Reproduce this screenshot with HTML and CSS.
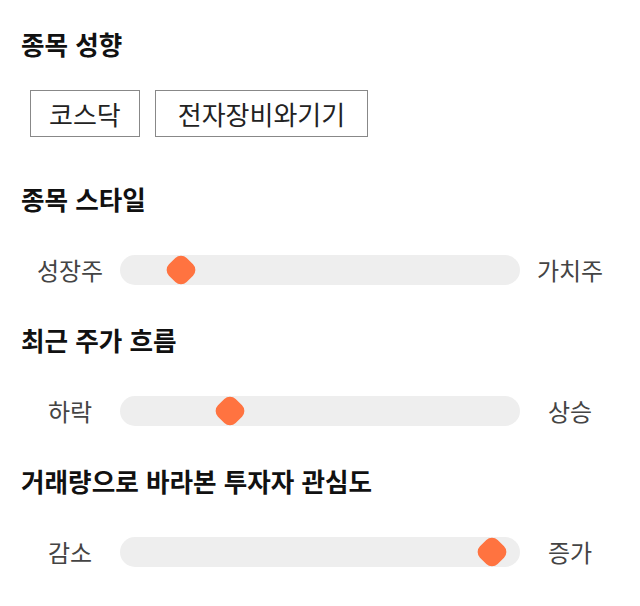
FILE: index.html
```html
<!DOCTYPE html>
<html lang="ko">
<head>
    <meta charset="UTF-8">
    <title>종목 분석</title>
    <link rel="stylesheet" href="styles.css">
</head>
<body>

<div class="section">
    <h2 class="title tight">종목 성향</h2>
    <div class="chips">
        <span class="chip">코스닥</span>
        <span class="chip wide">전자장비와기기</span>
    </div>
</div>

<div class="section">
    <h2 class="title">종목 스타일</h2>
    <div class="slider">
        <span class="label">성장주</span>
        <div class="track"><span class="thumb" style="left: 15.2%"></span></div>
        <span class="label">가치주</span>
    </div>
</div>

<div class="section">
    <h2 class="title">최근 주가 흐름</h2>
    <div class="slider">
        <span class="label">하락</span>
        <div class="track"><span class="thumb" style="left: 27.4%"></span></div>
        <span class="label">상승</span>
    </div>
</div>

<div class="section">
    <h2 class="title">거래량으로 바라본 투자자 관심도</h2>
    <div class="slider">
        <span class="label">감소</span>
        <div class="track"><span class="thumb" style="left: 93%"></span></div>
        <span class="label">증가</span>
    </div>
</div>

</body>
</html>
```

FILE: styles.css
```css
body {
    font-family: "Noto Sans CJK KR", "Noto Sans", sans-serif;
    margin: 0;
    padding: 28px 20px;
    background: #fff;
    color: #111;
}
.section {
    margin-bottom: 39px;
}
.title {
    font-size: 25.6px;
    font-weight: 700;
    line-height: 32px;
    margin: 0 0 40px;
    padding-left: 1px;
}
.title.tight {
    margin-bottom: 30px;
}
.chips {
    display: flex;
    gap: 15px;
    padding-left: 10px;
    margin-bottom: 46px;
}
.chip {
    border: 1px solid #888;
    height: 45px;
    line-height: 45px;
    padding: 0 18px;
    font-size: 26px;
    color: #222;
}
.chip.wide {
    padding: 0 22px;
}
.slider {
    display: grid;
    grid-template-columns: 100px 1fr 100px;
    align-items: center;
}
.label {
    text-align: center;
    font-size: 24px;
    line-height: 30px;
    color: #444;
}
.track {
    position: relative;
    height: 30px;
    border-radius: 15px;
    background: #eeeeee;
}
.thumb {
    position: absolute;
    top: 50%;
    width: 25px;
    height: 25px;
    border-radius: 8px;
    background: #ff7340;
    transform: translate(-50%, -50%) rotate(45deg);
}
```
